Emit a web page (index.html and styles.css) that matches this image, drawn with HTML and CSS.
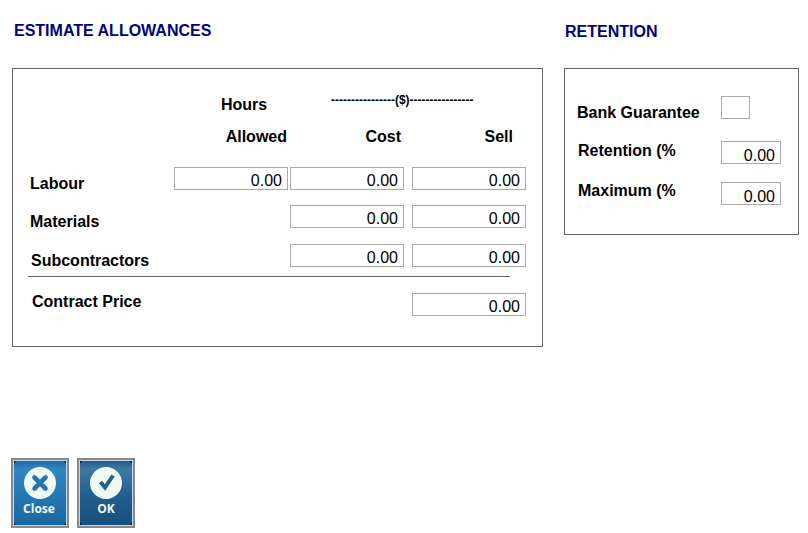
FILE: index.html

```html
<!DOCTYPE html>
<html lang="en">
<head>
    <meta charset="UTF-8">
    <title>Estimate Allowances</title>
    <link rel="stylesheet" href="styles.css">
</head>
<body>
    <div class="top-row">
        <section class="estimate">
            <h2>ESTIMATE ALLOWANCES</h2>
            <div class="panel estimate-panel">
                <div class="grid-row head-one">
                    <span class="hours">Hours</span>
                    <span class="dollars">----------------($)----------------</span>
                </div>
                <div class="grid-row head-two">
                    <span></span>
                    <span class="col-head">Allowed</span>
                    <span class="col-head cost-head">Cost</span>
                    <span class="col-head sell-head">Sell</span>
                </div>
                <div class="grid-row data-row first-row">
                    <label>Labour</label>
                    <input type="text" value="0.00">
                    <input type="text" value="0.00">
                    <input type="text" value="0.00">
                </div>
                <div class="grid-row data-row materials-row">
                    <label>Materials</label>
                    <span></span>
                    <input type="text" value="0.00">
                    <input type="text" value="0.00">
                </div>
                <div class="grid-row data-row subs-row">
                    <label class="nudge-one">Subcontractors</label>
                    <span></span>
                    <input type="text" value="0.00">
                    <input type="text" value="0.00">
                </div>
                <hr class="divider">
                <div class="grid-row data-row total-row">
                    <label class="nudge-two">Contract Price</label>
                    <span></span>
                    <span></span>
                    <input type="text" value="0.00">
                </div>
            </div>
        </section>

        <section class="retention">
            <h2 class="retention-title">RETENTION</h2>
            <div class="panel retention-panel">
                <div class="ret-row bank-row">
                    <label>Bank Guarantee</label>
                    <input type="checkbox" class="check">
                </div>
                <div class="ret-row percent-row">
                    <label class="ret-label percent-label">Retention (%</label>
                    <input type="text" value="0.00">
                </div>
                <div class="ret-row maximum-row">
                    <label class="ret-label">Maximum (%</label>
                    <input type="text" value="0.00">
                </div>
            </div>
        </section>
    </div>

    <div class="actions">
        <button type="button" class="action close-btn">
            <svg class="icon" viewBox="0 0 32 32" width="32" height="32">
                <circle cx="16" cy="16" r="16" fill="#eefaf2"/>
                <path d="M10.5 10.5 L21.5 21.5 M21.5 10.5 L10.5 21.5" stroke="#2474b0" stroke-width="4.6" stroke-linecap="round" fill="none"/>
            </svg>
            <span>Close</span>
        </button>
        <button type="button" class="action ok-btn">
            <svg class="icon" viewBox="0 0 32 32" width="32" height="32">
                <circle cx="16" cy="16" r="16" fill="#eefaf2"/>
                <path d="M10.5 15 L15 20.5 L23 8.5" stroke="#22608f" stroke-width="4" stroke-linecap="butt" stroke-linejoin="miter" fill="none"/>
            </svg>
            <span>OK</span>
        </button>
    </div>
</body>
</html>
```

FILE: styles.css

```css
html, body {
    height: 100%;
}

body {
    margin: 0;
    background-color: #fff;
    color: #000;
    font-family: "Liberation Sans", Arial, sans-serif;
    font-size: 16px;
    overflow: hidden;
}

.top-row {
    display: flex;
    gap: 21px;
    padding-left: 12px;
}

h2 {
    margin: 0;
    padding: 22px 0 0 2px;
    height: 68px;
    box-sizing: border-box;
    color: #000080;
    font-size: 16px;
    line-height: 18px;
    font-weight: bold;
}

.retention-title {
    padding: 23px 0 0 1px;
}

.panel {
    box-sizing: border-box;
    border: 1px solid #666;
}

.estimate-panel {
    width: 531px;
    height: 279px;
    padding: 27px 0 0 17px;
}

.retention-panel {
    width: 235px;
    height: 167px;
    padding-left: 12px;
}

label {
    display: block;
    font-weight: bold;
    line-height: 18px;
}

input[type="text"] {
    box-sizing: border-box;
    width: 114px;
    height: 23px;
    margin: 0;
    padding: 5px 5px 0 0;
    border: 1px solid #aaa;
    border-radius: 0;
    outline: none;
    color: #000;
    font-family: inherit;
    font-size: 16px;
    text-align: right;
}

.grid-row {
    display: grid;
    grid-template-columns: 144px 116px 122px 114px;
}

.head-one {
    height: 18px;
    line-height: 18px;
    font-weight: bold;
}

.hours {
    grid-column: 2;
    margin-left: 47px;
    white-space: nowrap;
}

.dollars {
    grid-column: 3 / 5;
    margin: -1px 0 0 41px;
    font-size: 12px;
    line-height: 10px;
    height: 10px;
    color: #000;
    white-space: nowrap;
}

.head-two {
    margin-top: 14px;
    line-height: 18px;
    font-weight: bold;
}

.col-head {
    width: 113px;
    text-align: right;
}

.cost-head {
    width: 111px;
}

.sell-head {
    width: 101px;
}

.data-row {
    height: 23px;
}

.data-row label {
    margin-top: 8px;
}

.first-row {
    margin-top: 21px;
}

.materials-row {
    margin-top: 15px;
}

.subs-row {
    margin-top: 16px;
}

.nudge-one {
    margin-left: 1px;
}

.data-row .nudge-two {
    margin: 0 0 0 2px;
}

.divider {
    width: 482px;
    height: 1px;
    margin: 9px 0 0 -2px;
    border: 0;
    background-color: #666;
}

.total-row {
    margin-top: 16px;
}

.ret-row {
    display: grid;
    grid-template-columns: 144px auto;
}

.ret-row input[type="text"] {
    width: 60px;
    padding-top: 6px;
}

.bank-row {
    height: 50px;
    padding-top: 27px;
    box-sizing: border-box;
}

.bank-row label {
    margin-top: 8px;
}

.ret-label {
    margin: 0 0 0 1px;
}

.percent-label {
    margin-top: 1px;
}

.percent-row {
    margin-top: 22px;
}

.maximum-row {
    margin-top: 18px;
}

.check {
    appearance: none;
    box-sizing: border-box;
    width: 29px;
    height: 23px;
    margin: 0;
    border: 1px solid #aaa;
    background-color: #fff;
}

.actions {
    display: flex;
    gap: 8px;
    padding: 111px 0 0 11px;
}

.action {
    box-sizing: border-box;
    display: flex;
    flex-direction: column;
    align-items: center;
    width: 58px;
    height: 70px;
    margin: 0;
    padding: 7px 0 0;
    border: 2px solid #888;
    border-radius: 0;
    color: #eefaf2;
    font-family: "Open Sans", "Liberation Sans", sans-serif;
    font-size: 12px;
    font-weight: bold;
    box-shadow: inset 0 0 0 1px #c8d8e4;
}

.action span {
    margin-top: 2px;
    line-height: 16px;
}

.close-btn span {
    padding-right: 2px;
}

.close-btn {
    background:
        radial-gradient(circle at 1px 1px, #0e2c44 1.5px, transparent 2.5px),
        radial-gradient(circle at calc(100% - 1px) 1px, #0e2c44 1.5px, transparent 2.5px),
        radial-gradient(circle at 1px calc(100% - 1px), #0e2c44 1.5px, transparent 2.5px),
        radial-gradient(circle at calc(100% - 1px) calc(100% - 1px), #0e2c44 1.5px, transparent 2.5px),
        linear-gradient(180deg, #1b6aa6 0, #2e86c1 14%, #2474b0 60%, #1a66a2 100%);
}

.ok-btn {
    background:
        radial-gradient(circle at 1px 1px, #0c2238 1.5px, transparent 2.5px),
        radial-gradient(circle at calc(100% - 1px) 1px, #0c2238 1.5px, transparent 2.5px),
        radial-gradient(circle at 1px calc(100% - 1px), #0c2238 1.5px, transparent 2.5px),
        radial-gradient(circle at calc(100% - 1px) calc(100% - 1px), #0c2238 1.5px, transparent 2.5px),
        linear-gradient(180deg, #1d5684 0, #3f7aa5 14%, #215d8e 55%, #17507f 100%);
}
```
